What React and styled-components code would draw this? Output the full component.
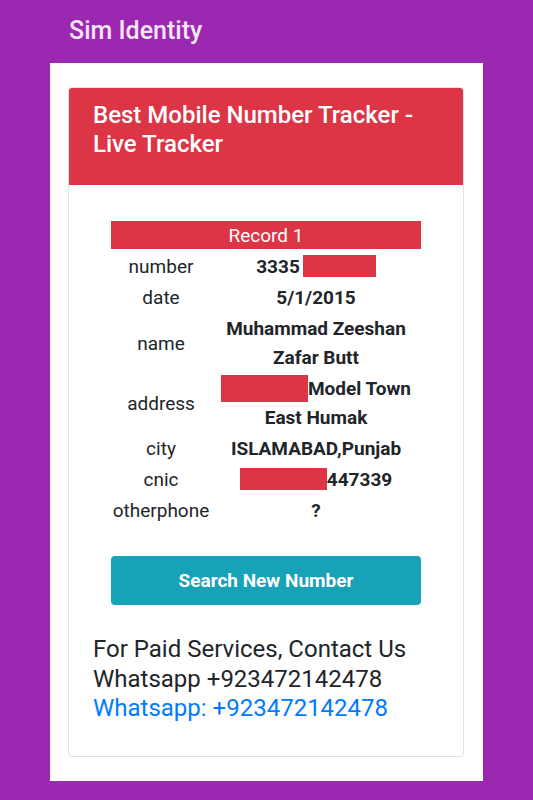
import React from 'react';
import styled, { createGlobalStyle } from 'styled-components';

const GlobalStyle = createGlobalStyle`
  html, body {
    margin: 0;
    padding: 0;
    background: #9c27b0;
  }
  body {
    font-family: Roboto, 'Liberation Sans', sans-serif;
    color: #212529;
  }
`;

const Page = styled.div`
  width: 533px;
  height: 800px;
  background: #9c27b0;
  overflow: hidden;
`;

const AppTitle = styled.div`
  height: 63px;
  padding-left: 69px;
  line-height: 62px;
  font-size: 25px;
  font-weight: 500;
  color: #f5e6f7;
`;

const Panel = styled.div`
  margin-left: 50px;
  width: 433px;
  background: #fff;
  padding: 24px 19px 24px 18px;
  box-sizing: border-box;
`;

const Card = styled.div`
  border: 1px solid #e2e2e2;
  border-radius: 4px;
  overflow: hidden;
`;

const CardHeader = styled.div`
  background: #dc3545;
  color: #fff;
  font-size: 24px;
  font-weight: 500;
  line-height: 29px;
  padding: 13px 24px 26px;
`;

const CardBody = styled.div`
  padding: 36px 0 32px;
  display: flex;
  flex-direction: column;
  align-items: center;
`;

const Table = styled.div`
  width: 310px;
  display: grid;
  grid-template-columns: 100px 210px;
  font-size: 19px;
`;

const RecordHead = styled.div`
  grid-column: 1 / 3;
  background: #dc3545;
  color: #fff;
  text-align: center;
  height: 28px;
  line-height: 29px;
  margin-bottom: 2px;
`;

const Label = styled.div`
  display: flex;
  align-items: center;
  justify-content: center;
  padding: 1px 0;
  line-height: 29px;
  white-space: nowrap;
`;

const Value = styled.div`
  text-align: center;
  font-weight: 700;
  padding: 1px 0;
  line-height: 29px;
`;

const Redact = styled.span`
  display: inline-block;
  vertical-align: middle;
  width: ${p => p.w}px;
  height: ${p => p.h}px;
  margin-left: ${p => p.gap || 0}px;
  background: #dc3545;
  margin-top: -3px;
`;

const SearchButton = styled.button`
  margin-top: 30px;
  width: 310px;
  height: 49px;
  border: none;
  border-radius: 4px;
  background: #17a2b8;
  color: #fff;
  font-family: Roboto, 'Liberation Sans', sans-serif;
  font-size: 19px;
  font-weight: 700;
  cursor: pointer;
`;

const Contact = styled.div`
  align-self: stretch;
  margin-top: 30px;
  padding-left: 24px;
  font-size: 24px;
  line-height: 29.5px;
  color: #212529;
`;

const WhatsLink = styled.a`
  display: block;
  color: #007bff;
  text-decoration: none;
`;

const rows = [
  { label: 'number', value: <>3335<Redact w={73} h={22} gap={3} /></> },
  { label: 'date', value: '5/1/2015' },
  { label: 'name', value: <>Muhammad Zeeshan<br />Zafar Butt</> },
  { label: 'address', value: <><Redact w={87} h={27} />Model Town<br />East Humak</> },
  { label: 'city', value: 'ISLAMABAD,Punjab' },
  { label: 'cnic', value: <><Redact w={87} h={22} />447339</> },
  { label: 'otherphone', value: '?' },
];

export default function App() {
  return (
    <Page>
      <GlobalStyle />
      <AppTitle>Sim Identity</AppTitle>
      <Panel>
        <Card>
          <CardHeader>Best Mobile Number Tracker - Live Tracker</CardHeader>
          <CardBody>
            <Table>
              <RecordHead>Record 1</RecordHead>
              {rows.map(r => (
                <React.Fragment key={r.label}>
                  <Label>{r.label}</Label>
                  <Value>{r.value}</Value>
                </React.Fragment>
              ))}
            </Table>
            <SearchButton>Search New Number</SearchButton>
            <Contact>
              For Paid Services, Contact Us<br />
              Whatsapp +923472142478
              <WhatsLink href="#">Whatsapp: +923472142478</WhatsLink>
            </Contact>
          </CardBody>
        </Card>
      </Panel>
    </Page>
  );
}
